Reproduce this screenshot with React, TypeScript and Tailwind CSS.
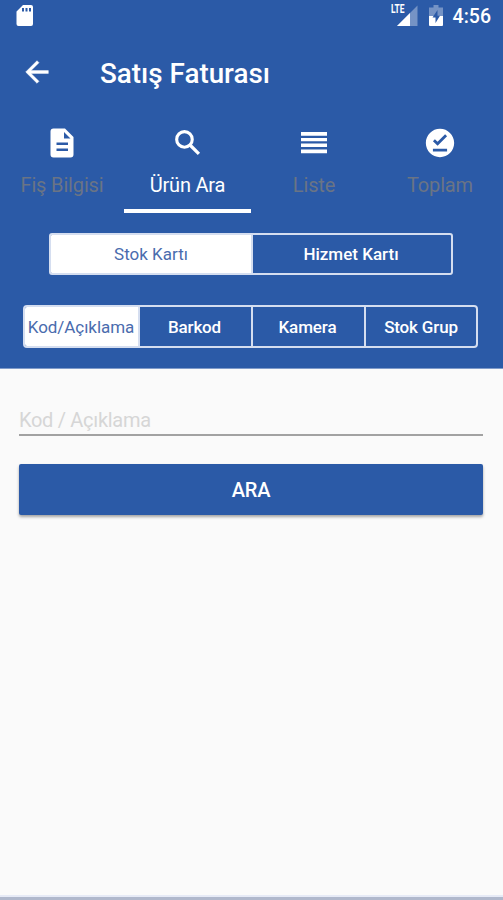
import type { ReactNode } from 'react';
import { MdOfflinePin } from 'react-icons/md';

const tabs: { label: string; icon: ReactNode; active?: boolean }[] = [
  { label: 'Fiş Bilgisi', icon: <DocumentIcon /> },
  { label: 'Ürün Ara', icon: <SearchIcon />, active: true },
  { label: 'Liste', icon: <ListIcon /> },
  { label: 'Toplam', icon: <MdOfflinePin className="size-[34px]" /> },
];

function BackIcon() {
  return (
    <svg viewBox="0 0 24 24" className="size-[34px]" fill="currentColor" stroke="currentColor" strokeWidth="0.3">
      <path d="M20 11H7.830l5.590-5.590L12 4l-8 8 8 8 1.410-1.410L7.830 13H20v-2z" />
    </svg>
  );
}

function SearchIcon() {
  return (
    <svg viewBox="0 0 24 24" className="size-[34px]" fill="none" stroke="currentColor">
      <circle cx="9.500" cy="9.500" r="5.500" strokeWidth="2.200" />
      <path d="M13.600 13.600L19.700 19.700" strokeWidth="2.300" />
    </svg>
  );
}

function DocumentIcon() {
  return (
    <svg viewBox="0 0 24 30" className="h-[30px] w-6" fill="currentColor">
      <path
        fillRule="evenodd"
        d="M3.5 0.5H15L23.5 9V26.500Q23.500 29.500 20.500 29.500H3.500Q0.500 29.500 0.500 26.500V3.500Q0.500 0.500 3.500 0.500ZM14 4V10.500H20.500ZM6.500 14.500V17H18V14.500ZM6.500 20.500V23H18V20.500Z"
      />
    </svg>
  );
}

function ListIcon() {
  return (
    <svg viewBox="0 0 26 22" className="h-[22px] w-[26px]" fill="currentColor">
      <path d="M0 0H26V3.700H0ZM0 5.900H26V9.300H0ZM0 11.600H26V15H0ZM0 17.500H26V21.200H0Z" />
    </svg>
  );
}

function StatusBar() {
  return (
    <div className="flex h-8 items-center pr-3 pl-4">
      <svg viewBox="0 0 18 22" className="h-[22px] w-[18px]" fill="currentColor">
        <path
          fillRule="evenodd"
          d="M7 0H15Q17 0 17 2V19Q17 21 15 21H2.500Q0.500 21 0.500 19V6.500ZM6 3V6.500H8V3ZM9.500 3V6.500H11.500V3ZM13 3V6.500H15V3Z"
        />
      </svg>
      <div className="ml-auto flex items-center">
        <div className="relative h-[22px] w-[27px]">
          <svg viewBox="0 0 27 22" className="h-[22px] w-[27px]" fill="currentColor">
            <path d="M26.500 0.500V21H6Z" className="opacity-35" />
            <path d="M19 8V21H6Z" />
          </svg>
          <span className="absolute -top-px left-0 origin-left scale-x-[.7] bg-[#2b5aa7] pr-px text-[12px] leading-[11px] font-bold">
            LTE
          </span>
        </div>
        <svg viewBox="0 0 14 22" className="ml-[11px] h-[22px] w-[14px]" fill="currentColor">
          <path d="M4.500 0H9.500V2.500H14V11H0V2.500H4.500Z" className="opacity-35" />
          <path d="M0 11H14V20Q14 21 13 21H1Q0 21 0 20Z" />
          <path d="M8.500 5L3.500 12.500H6.500V18L11 10.800H8.500Z" fill="#2b5aa7" />
        </svg>
        <span className="ml-[10px] pt-[2px] text-[19.5px] leading-[30px] font-medium">4:56</span>
      </div>
    </div>
  );
}

export default function App() {
  return (
    <div className="flex h-[900px] w-[503px] flex-col overflow-hidden bg-[#fafafa] font-[Roboto,sans-serif]">
      <header className="h-[369px] shrink-0 border-b border-[#7f9bca] bg-[#2b5aa7] text-white">
        <StatusBar />

        {/* Title */}
        <div className="flex h-20 items-center pl-[20px]">
          <BackIcon />
          <h1 className="ml-[46px] pt-[4px] text-[27.8px] leading-10 font-medium">Satış Faturası</h1>
        </div>

        {/* Tabs */}
        <nav className="grid h-[101px] grid-cols-[124px_127px_126px_126px]">
          {tabs.map((tab) => (
            <button
              key={tab.label}
              className={
                tab.active
                  ? 'flex flex-col items-center border-b-4 border-white pt-[12px]'
                  : 'flex flex-col items-center border-b-4 border-transparent pt-[12px]'
              }
            >
              <span className="flex h-[37px] items-center">{tab.icon}</span>
              <span
                className={
                  tab.active
                    ? 'mt-[10px] text-[20px] leading-7 tracking-[-0.2px]'
                    : 'mt-[10px] text-[20px] leading-7 tracking-[-0.15px] text-[#6a7485]'
                }
              >
                {tab.label}
              </span>
            </button>
          ))}
        </nav>

        {/* Card type */}
        <div className="mt-5 ml-[49px] grid h-[42px] w-[404px] grid-cols-[202px_198px] overflow-hidden rounded-[3px] border-2 border-[#d5def0] text-[17px]">
          <button className="border-r-2 border-[#d5def0] bg-white pt-[2px] text-[#4a6cae]">Stok Kartı</button>
          <button className="pt-[2px] pr-[2px] font-medium">Hizmet Kartı</button>
        </div>

        {/* Search type */}
        <div className="mt-[30px] ml-[23px] grid h-[43px] w-[455px] grid-cols-[115px_113px_113px_110px] overflow-hidden rounded-[4px] border-2 border-[#d5def0] text-[17px]">
          <button className="border-r-2 border-[#d5def0] bg-white pt-[3px] pr-px tracking-[-0.05px] text-[#4a6cae]">
            Kod/Açıklama
          </button>
          <button className="border-r-2 border-[#d5def0] pt-[3px] pr-[2px] font-medium tracking-[-0.15px]">Barkod</button>
          <button className="border-r-2 border-[#d5def0] pt-[3px] pr-[2px] font-medium tracking-[-0.1px]">Kamera</button>
          <button className="pt-[3px] font-medium tracking-[-0.15px]">Stok Grup</button>
        </div>
      </header>

      <main className="flex-1 pt-[35px] pr-5 pl-[19px]">
        <input
          placeholder="Kod / Açıklama"
          className="block h-8 w-full border-b-2 border-[#a2a2a2] bg-transparent pt-px text-[20px] tracking-[-0.3px] outline-none placeholder:text-[#d6d6d6]"
        />
        <button className="mt-7 h-[51px] w-full rounded-[2px] bg-[#2b5aa7] pt-px text-[20px] font-medium tracking-[-0.2px] text-white shadow-[0_2px_3px_rgba(0,0,0,0.35)]">
          ARA
        </button>
      </main>

      <footer className="h-[5px] shrink-0 border-t-2 border-[#e6eaf6] bg-[#b0b8cc]" />
    </div>
  );
}
